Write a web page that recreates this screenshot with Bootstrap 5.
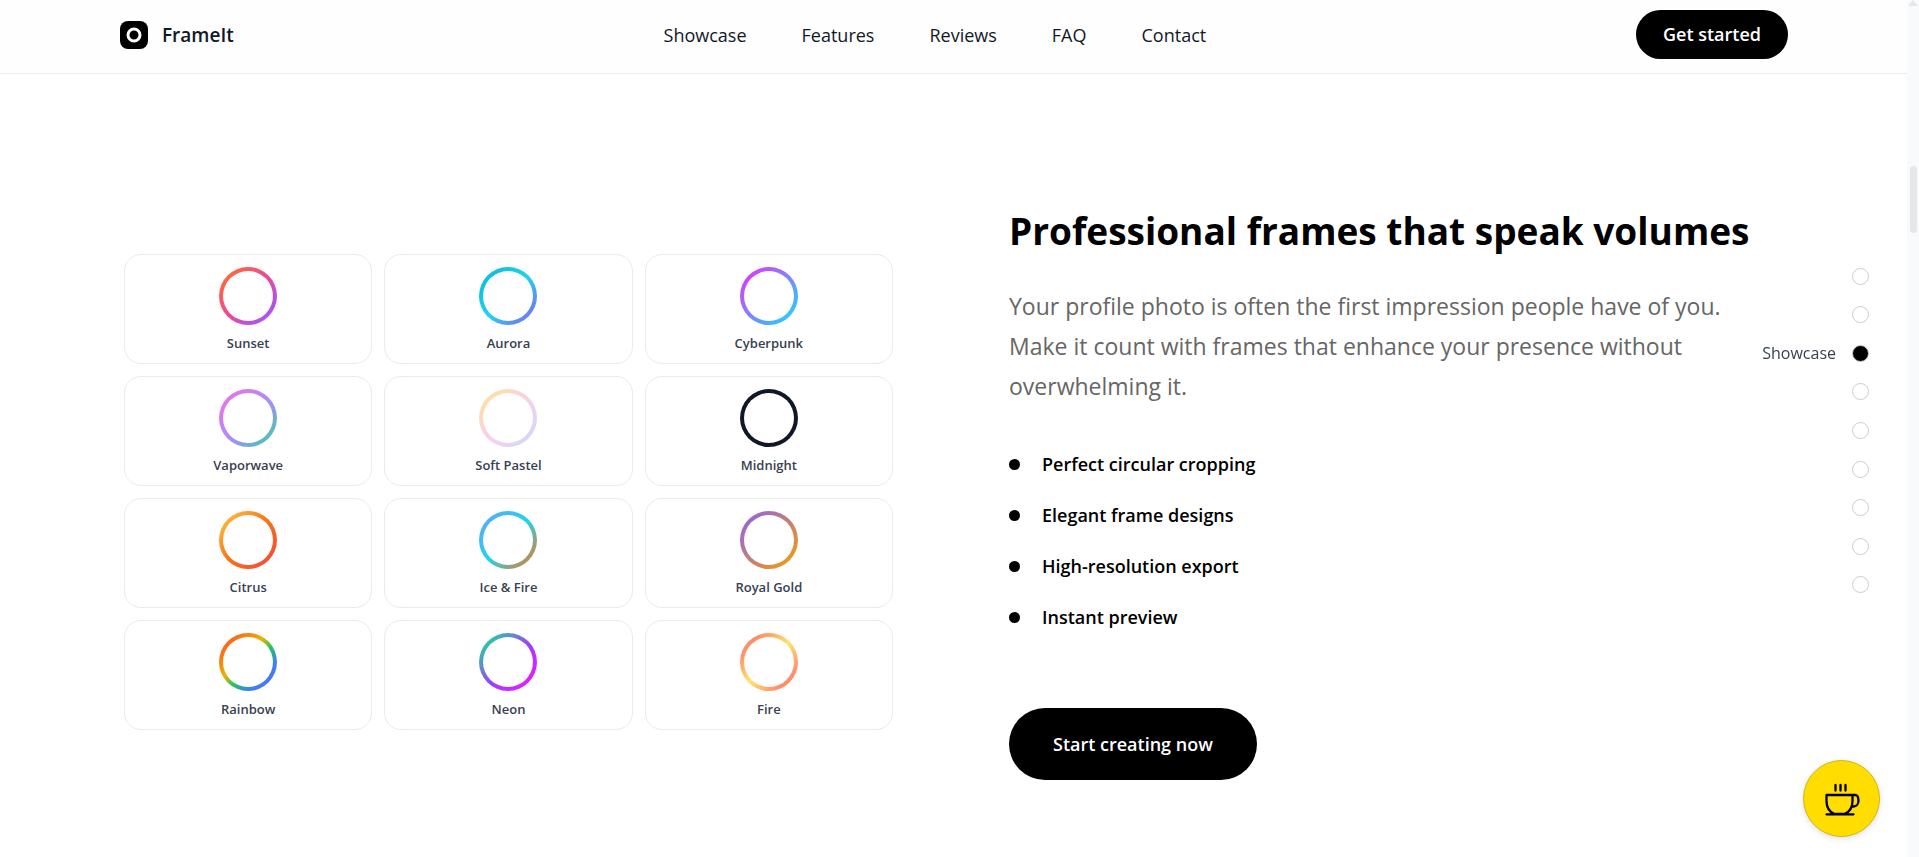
<!DOCTYPE html>
<html lang="en">
<head>
<meta charset="utf-8">
<meta name="viewport" content="width=device-width, initial-scale=1">
<title>FrameIt</title>
<link href="https://cdn.jsdelivr.net/npm/bootstrap@5.3.0/dist/css/bootstrap.min.css" rel="stylesheet">
<style>
  body { font-family: "Segoe UI", "Open Sans", sans-serif; color: #000; background: #fff; }
  .wrap { width: calc(100% - 48px); max-width: 1669px; }
  .topbar { background: #fefefe; border-bottom: 1px solid #ededee; padding: 10px 0 14px; }
  .brand { gap: 13px; font-size: 19px; line-height: 28px; font-weight: 600; color: #111827; }
  .topbar .nav-link { font-size: 18px; line-height: 28px; color: #111827; }
  .menu { gap: 55px; }
  .btn-ink { --bs-btn-color: #fff; --bs-btn-bg: #000; --bs-btn-hover-color: #fff; --bs-btn-hover-bg: #222; --bs-btn-active-color: #fff; --bs-btn-active-bg: #222; border: 0; font-weight: 600; font-size: 18px; line-height: 25px; }
  .btn-top { padding: 12px 27px; }
  .btn-main { padding: 23px 44px; line-height: 26px; }
  .hero { padding-top: 129px; padding-bottom: 76px; }
  .halves { display: grid; grid-template-columns: 1fr 1fr; gap: 111px; align-items: center; }
  .frames { display: grid; grid-template-columns: repeat(3, 1fr); gap: 12px; padding: 0 5px; }
  .frame-card { border: 1px solid #ebebed; border-radius: 17px; padding: 12px 12px 10px; background: #fff; }
  .ring { width: 58px; height: 58px; border: 4px solid transparent; border-radius: 50%; margin-bottom: 8px; background: linear-gradient(#fff, #fff) padding-box, var(--paint) border-box; }
  .frame-name { font-size: 13px; line-height: 20px; font-weight: 600; color: #374151; }
  .title { font-size: 37px; line-height: 56px; font-weight: 700; margin-bottom: 27px; }
  .intro { max-width: 740px; font-size: 23px; line-height: 40px; color: #666; margin-bottom: 45px; }
  .points { gap: 24px; margin-bottom: 77px; font-size: 18px; line-height: 27px; font-weight: 600; }
  .points li { gap: 22px; }
  .bullet { width: 11px; height: 11px; border-radius: 50%; background: #000; }
  .dots { right: 50px; top: 257px; height: 347px; }
  .dots a { gap: 16px; font-size: 16px; color: #374151; }
  .dots i { width: 17px; height: 17px; border: 1px solid #ccc; border-radius: 50%; background: #fff; }
  .dots .on i { background: #000; }
  .coffee { right: 39px; bottom: 20px; width: 77px; height: 77px; background: #fd0; border: 1px solid #d0b60c; box-shadow: 0 2px 6px rgba(0,0,0,.12); }
  .rail { width: 12px; background: #f9fafb; }
  .rail-thumb { width: 7px; height: 67px; margin-top: 160px; border-radius: 4px; background: #e5e7eb; }
  @media (max-width: 1100px) {
    .halves { grid-template-columns: 1fr; gap: 48px; }
    .menu { gap: 16px; }
    .dots { display: none !important; }
  }
</style>
</head>
<body class="d-flex vh-100 overflow-hidden">
<div class="flex-grow-1 overflow-hidden">
  <header class="topbar">
    <div class="wrap mx-auto d-flex align-items-center justify-content-between">
      <a href="#" class="brand d-flex align-items-center text-decoration-none">
        <svg width="30" height="30" viewBox="0 0 30 30" aria-hidden="true"><rect x="1" y="1" width="28" height="28" rx="8"/><circle cx="15" cy="15" r="6" fill="none" stroke="#fff" stroke-width="3"/></svg>
        <span>FrameIt</span>
      </a>
      <nav class="menu d-flex">
        <a class="nav-link" href="#showcase">Showcase</a>
        <a class="nav-link" href="#features">Features</a>
        <a class="nav-link" href="#reviews">Reviews</a>
        <a class="nav-link" href="#faq">FAQ</a>
        <a class="nav-link" href="#contact">Contact</a>
      </nav>
      <button type="button" class="btn btn-ink btn-top rounded-pill">Get started</button>
    </div>
  </header>

  <main class="hero" id="showcase">
    <div class="wrap mx-auto halves">
      <div class="frames">
        <div class="frame-card d-flex flex-column align-items-center"><div class="ring" style="--paint:linear-gradient(135deg,#ff6b35 10%,#ec4899 50%,#a855f7 85%)"></div><span class="frame-name">Sunset</span></div>
        <div class="frame-card d-flex flex-column align-items-center"><div class="ring" style="--paint:linear-gradient(135deg,#06b6d4,#22d3ee 50%,#8b5cf6)"></div><span class="frame-name">Aurora</span></div>
        <div class="frame-card d-flex flex-column align-items-center"><div class="ring" style="--paint:linear-gradient(135deg,#f328f7,#0de0ff)"></div><span class="frame-name">Cyberpunk</span></div>
        <div class="frame-card d-flex flex-column align-items-center"><div class="ring" style="--paint:linear-gradient(135deg,#f472e0,#b388ff 50%,#2dd4a0)"></div><span class="frame-name">Vaporwave</span></div>
        <div class="frame-card d-flex flex-column align-items-center"><div class="ring" style="--paint:linear-gradient(135deg,#fde68a,#fbcfe8 50%,#c7d9ff)"></div><span class="frame-name">Soft Pastel</span></div>
        <div class="frame-card d-flex flex-column align-items-center"><div class="ring" style="--paint:linear-gradient(135deg,#0f172a,#111827)"></div><span class="frame-name">Midnight</span></div>
        <div class="frame-card d-flex flex-column align-items-center"><div class="ring" style="--paint:linear-gradient(135deg,#ffca4a,#f97316 50%,#ef4444)"></div><span class="frame-name">Citrus</span></div>
        <div class="frame-card d-flex flex-column align-items-center"><div class="ring" style="--paint:linear-gradient(135deg,#60a5fa,#22d3ee 50%,#f97316)"></div><span class="frame-name">Ice &amp; Fire</span></div>
        <div class="frame-card d-flex flex-column align-items-center"><div class="ring" style="--paint:linear-gradient(135deg,#8b5cf6,#f59e0b 95%)"></div><span class="frame-name">Royal Gold</span></div>
        <div class="frame-card d-flex flex-column align-items-center"><div class="ring" style="--paint:linear-gradient(135deg,#ef4444,#f97316 20%,#eab308 42%,#22c55e 57%,#3b82f6 75%,#6366f1)"></div><span class="frame-name">Rainbow</span></div>
        <div class="frame-card d-flex flex-column align-items-center"><div class="ring" style="--paint:linear-gradient(135deg,#22d3a0 10%,#a03cff 55%,#e020ff 85%)"></div><span class="frame-name">Neon</span></div>
        <div class="frame-card d-flex flex-column align-items-center"><div class="ring" style="--paint:linear-gradient(135deg,#ff7f6b,#ff9068 20%,#ffe66d 50%,#ff9068 80%,#ff7f6b)"></div><span class="frame-name">Fire</span></div>
      </div>
      <div>
        <h2 class="title">Professional frames that speak volumes</h2>
        <p class="intro">Your profile photo is often the first impression people have of you. Make it count with frames that enhance your presence without overwhelming it.</p>
        <ul class="points list-unstyled d-flex flex-column">
          <li class="d-flex align-items-center"><span class="bullet"></span>Perfect circular cropping</li>
          <li class="d-flex align-items-center"><span class="bullet"></span>Elegant frame designs</li>
          <li class="d-flex align-items-center"><span class="bullet"></span>High-resolution export</li>
          <li class="d-flex align-items-center"><span class="bullet"></span>Instant preview</li>
        </ul>
        <button type="button" class="btn btn-ink btn-main rounded-pill">Start creating now</button>
      </div>
    </div>
  </main>
</div>

<nav class="dots position-fixed d-flex flex-column align-items-end" aria-label="Sections">
  <a href="#s1" class="flex-fill d-flex align-items-center" aria-label="Section 1"><i></i></a>
  <a href="#s2" class="flex-fill d-flex align-items-center" aria-label="Section 2"><i></i></a>
  <a href="#showcase" class="on flex-fill d-flex align-items-center text-decoration-none"><span class="lh-1">Showcase</span><i></i></a>
  <a href="#s4" class="flex-fill d-flex align-items-center" aria-label="Section 4"><i></i></a>
  <a href="#s5" class="flex-fill d-flex align-items-center" aria-label="Section 5"><i></i></a>
  <a href="#s6" class="flex-fill d-flex align-items-center" aria-label="Section 6"><i></i></a>
  <a href="#s7" class="flex-fill d-flex align-items-center" aria-label="Section 7"><i></i></a>
  <a href="#s8" class="flex-fill d-flex align-items-center" aria-label="Section 8"><i></i></a>
  <a href="#s9" class="flex-fill d-flex align-items-center" aria-label="Section 9"><i></i></a>
</nav>

<button type="button" class="coffee btn position-fixed rounded-circle p-0 d-flex align-items-center justify-content-center" aria-label="Buy me a coffee">
  <svg width="36" height="34" viewBox="0 0 36 34" fill="none" stroke="#000" stroke-width="2.300" stroke-linecap="round" stroke-linejoin="round"><path d="M11.500 3v5.500M16.500 3v5.500M21.500 3v5.500M2.500 13h26v6c0 6-3 11-8 13h-10c-5-2-8-7-8-13zM2.500 32.300h27M28.500 13h2.500c2 0 3.500 2 3.500 5.500s-2 6-5 6h-1.500"/></svg>
</button>

<aside class="rail flex-shrink-0 d-flex flex-column align-items-center" aria-hidden="true">
  <svg width="10" height="6" viewBox="0 0 10 6"><path d="M5 0l5 6H0z" fill="#e5e7eb"/></svg>
  <div class="rail-thumb"></div>
</aside>
<script src="https://cdn.jsdelivr.net/npm/bootstrap@5.3.0/dist/js/bootstrap.bundle.min.js"></script>
</body>
</html>
